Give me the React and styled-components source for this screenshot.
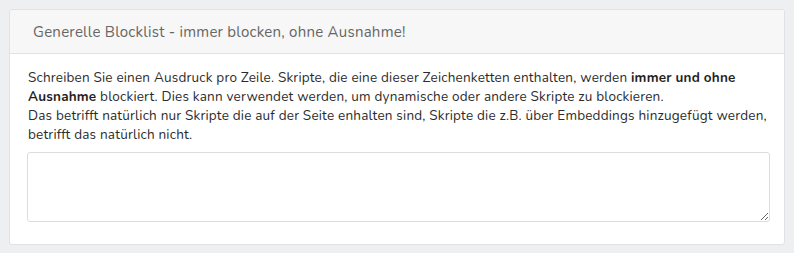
import React from 'react';
import styled, { createGlobalStyle } from 'styled-components';

const GlobalStyle = createGlobalStyle`
  html, body {
    margin: 0;
    padding: 0;
    background: #eeeff1;
    font-family: Nunito, Lato, "Open Sans", sans-serif;
  }
`;

const Page = styled.div`
  padding: 9px 9px 8px 9px;
`;

const Card = styled.section`
  background: #ffffff;
  border: 1px solid #e2e2e4;
  border-radius: 3px;
  overflow: hidden;
`;

const CardHeader = styled.header`
  background: #f7f7f7;
  border-bottom: 1px solid #e2e2e4;
  height: 43px;
  padding: 0 23px;
  display: flex;
  align-items: center;
  font-size: 15px;
  color: #666666;
  letter-spacing: 0.25px;
`;

const CardBody = styled.div`
  padding: 14px 14px 22px 17px;
`;

const Help = styled.p`
  margin: 0 0 8px 1px;
  font-size: 13.5px;
  line-height: 19px;
  color: #2b2b2b;
  letter-spacing: 0.2px;

  strong {
    font-weight: 700;
    color: #1f1f1f;
  }
`;

const Field = styled.textarea`
  display: block;
  box-sizing: border-box;
  width: 100%;
  height: 70px;
  margin: 0;
  border: 1px solid #dcdcdc;
  border-radius: 3px;
  background: #ffffff;
  font-family: inherit;
  font-size: 13px;
  padding: 6px 10px;
  resize: vertical;
  outline: none;
`;

export default function App() {
  return (
    <>
      <GlobalStyle />
      <Page>
        <Card>
          <CardHeader>Generelle Blocklist - immer blocken, ohne Ausnahme!</CardHeader>
          <CardBody>
            <Help>
              Schreiben Sie einen Ausdruck pro Zeile. Skripte, die eine dieser Zeichenketten enthalten, werden{' '}
              <strong>immer und ohne Ausnahme</strong> blockiert. Dies kann verwendet werden, um dynamische oder
              andere Skripte zu blockieren.
              <br />
              Das betrifft natürlich nur Skripte die auf der Seite enhalten sind, Skripte die z.B. über Embeddings
              hinzugefügt werden, betrifft das natürlich nicht.
            </Help>
            <Field />
          </CardBody>
        </Card>
      </Page>
    </>
  );
}
